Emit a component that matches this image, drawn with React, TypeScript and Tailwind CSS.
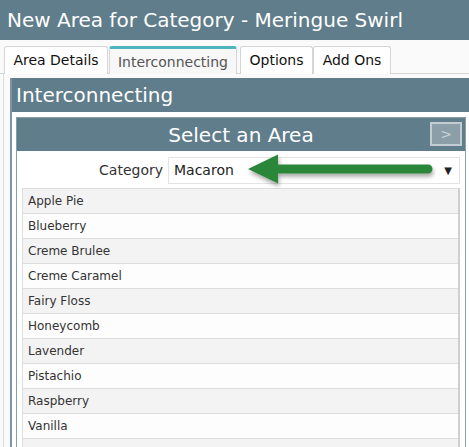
import React from "react";

const areas = [
  "Apple Pie",
  "Blueberry",
  "Creme Brulee",
  "Creme Caramel",
  "Fairy Floss",
  "Honeycomb",
  "Lavender",
  "Pistachio",
  "Raspberry",
  "Vanilla",
  "",
];

const tabs = ["Area Details", "Interconnecting", "Options", "Add Ons"];

function Arrow() {
  return (
    <svg className="pointer-events-none absolute left-[222px] top-[-4px]" width="200" height="38" viewBox="0 0 200 38">
      <defs>
        <filter id="sh" x="-10%" y="-30%" width="120%" height="170%">
          <feDropShadow dx="1" dy="3" stdDeviation="2" floodColor="#000" floodOpacity="0.35" />
        </filter>
      </defs>
      <g filter="url(#sh)">
        <path d="M4 16 L34 1.5 L34 11.5 L184 11.5 A4.5 4.5 0 0 1 184 20.5 L34 20.5 L34 30.5 Z" fill="#2b8639" />
      </g>
    </svg>
  );
}

export default function App() {
  return (
    <div className="h-[447px] w-[469px] overflow-hidden bg-[#fafafa] font-['DejaVu_Sans',sans-serif]">
      {/* Title */}
      <div className="flex h-[40px] items-center bg-[#607d8b] pl-[7px] text-[20px] text-white">
        New Area for Category - Meringue Swirl
      </div>

      {/* Tabs */}
      <div className="mt-[6px] flex border-b border-[#d5d5d5] pl-[4px]">
        {tabs.map((t, i) =>
          i === 1 ? (
            <div
              key={t}
              className="-mb-px ml-px flex h-[28px] w-[128px] items-center justify-center rounded-t-[3px] border-x border-t-[3px] border-[#d5d5d5] border-t-[#4cb5c0] bg-[#f7f7f7] pt-[2px] text-[14px] text-[#555]"
            >
              {t}
            </div>
          ) : (
            <div
              key={t}
              className={`-mb-px flex h-[28px] items-center justify-center rounded-t-[3px] border border-b-0 border-[#d5d5d5] bg-white text-[14px] text-[#111] ${
                i === 0 ? "w-[104px]" : i === 2 ? "ml-[3px] w-[73px]" : "w-[78px]"
              }`}
            >
              {t}
            </div>
          )
        )}
      </div>

      {/* Tab content */}
      <div className="ml-[3px] border-l border-[#dcdcdc] pl-[6px] pt-[4px]">
        <div className="border-l-2 border-[#7f949e] bg-white">
          <div className="flex h-[34px] items-center bg-[#607d8b] pl-[4px] text-[20px] text-white">Interconnecting</div>
          <div className="pl-[4px] pr-[3px] pt-[5px]">
            <div className="w-[450px] border border-[#8a9ea8] bg-white">
              <div className="relative flex h-[33px] items-center justify-center bg-[#607d8b] text-[20px] text-white">
                Select an Area
                <div className="absolute right-[3px] top-[4px] flex h-[24px] w-[32px] items-center justify-center border-2 border-[#c3ccd0] bg-[#8c9fa8] text-[14px] text-[#c9d2d6]">
                  &gt;
                </div>
              </div>
              <div className="px-[5px] pt-[6px]">
                <div className="relative flex items-center">
                  <span className="w-[146px] pr-[5px] text-right text-[14px] text-[#333]">Category</span>
                  <div className="flex h-[27px] flex-1 items-center justify-between border border-[#e3e3e3] bg-white pl-[5px] pr-[7px] text-[14px] text-[#222]">
                    <span>Macaron</span>
                    <span className="text-[10px] text-[#222]">▼</span>
                  </div>
                  <Arrow />
                </div>
                <div className="mt-[4px] border border-r-2 border-[#dddddd] border-r-[#cfcfcf]">
                  {areas.map((a, i) => (
                    <div
                      key={i}
                      className={`flex h-[25px] items-center border-b border-[#dddddd] pl-[5px] text-[12px] text-[#333] ${
                        i % 2 === 0 ? "bg-[#f3f3f3]" : "bg-[#fdfdfd]"
                      }`}
                    >
                      {a}
                    </div>
                  ))}
                </div>
              </div>
            </div>
          </div>
        </div>
      </div>
    </div>
  );
}
